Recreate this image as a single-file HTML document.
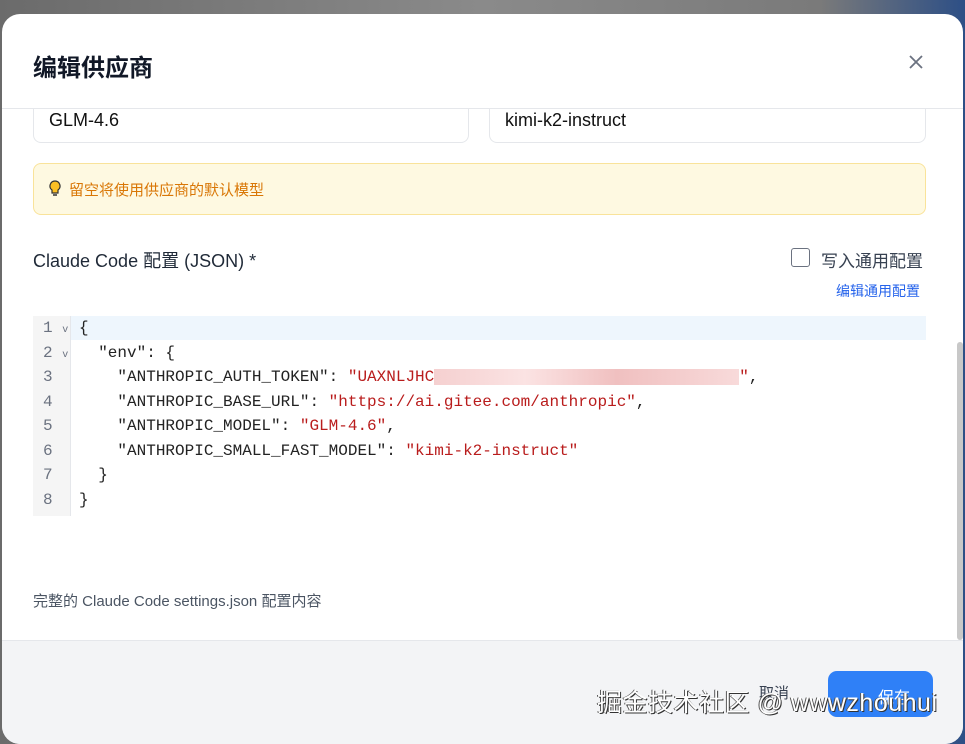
<!DOCTYPE html>
<html><head><meta charset="utf-8"><style>
*{box-sizing:border-box;margin:0;padding:0}
body{width:965px;height:736px;overflow:hidden;background:linear-gradient(90deg,#6b6b6b,#8a8a8a 50%,#7a7a7a 85%,#2d4f86);font-family:"Liberation Sans","Noto Sans CJK SC",sans-serif;position:relative}
.modal{position:absolute;left:2px;top:14px;width:961px;height:730px;background:#fff;border-radius:18px;overflow:hidden}
.hdr{height:95px;border-bottom:1px solid #e5e7eb;position:relative}
.hdr h1{position:absolute;left:31px;top:34px;font-size:24px;font-weight:bold;color:#111827}
.x{position:absolute;left:904px;top:38px;width:20px;height:20px}
.inp{position:absolute;top:95px;height:34px;border:1px solid #e5e7eb;border-top:none;border-radius:0 0 8px 8px;font-size:18px;color:#111;padding:0 0 0 15px;line-height:18px;padding-top:2px}
.tip{position:absolute;left:31px;top:149px;width:893px;height:52px;background:#fef9e1;border:1px solid #f9e39a;border-radius:8px;font-size:15px;color:#d97706;padding:15px 0 0 35px}
.lbl{position:absolute;left:31px;top:233px;font-size:18px;color:#1f2937}
.cb{position:absolute;left:789px;top:234px;width:19px;height:19px;border:1.5px solid #6b7280;border-radius:3px}
.cbt{position:absolute;left:819px;top:233px;font-size:17px;color:#374151}
.edit{position:absolute;left:834px;top:267px;font-size:14px;color:#2563eb}
.code{position:absolute;left:31px;top:302px;width:893px;height:200px;font-family:"Liberation Mono",monospace;font-size:16px}
.gut{position:absolute;left:0;top:0;width:38px;height:200px;background:#f5f5f5;border-right:1px solid #e5e7eb}
.hl{position:absolute;left:0;top:0;width:893px;height:24px;background:#eef6fd}
.ln{position:absolute;height:24.5px;line-height:24px;color:#6b7280}
.tx{position:absolute;left:46px;height:24px;line-height:24px;color:#222;white-space:pre}
.s{color:#b91c1c}
.foot{position:absolute;left:31px;top:576px;font-size:15px;color:#4b5563}
.fbar{position:absolute;left:0;top:626px;width:961px;height:110px;background:#f3f4f6;border-top:1px solid #e5e7eb}
.save{position:absolute;left:826px;top:657px;width:105px;height:46px;background:#2f80f7;border-radius:9px}
.scroll{position:absolute;left:955px;top:328px;width:6px;height:298px;background:#c8c8c8;border-radius:3px}
.wm{position:absolute;left:597px;top:683px;font-size:25px;color:#fff;text-shadow:1px 1px 0 #333,-1px 0 0 #555;letter-spacing:0.5px}
</style></head><body>
<div class="modal">
 <div class="hdr"><h1>编辑供应商</h1>
 <svg class="x" viewBox="0 0 20 20"><path d="M4 4L16 16M16 4L4 16" stroke="#6b7280" stroke-width="1.8"/></svg></div>
 <div class="inp" style="left:31px;width:436px">GLM-4.6</div>
 <div class="inp" style="left:487px;width:437px">kimi-k2-instruct</div>
 <div class="tip"><svg style="position:absolute;left:15px;top:16px" width="12" height="18" viewBox="0 0 12 18"><path d="M6 1a5 5 0 0 0-3 9v3h6v-3a5 5 0 0 0-3-9z" fill="#fbbf24" stroke="#333" stroke-width="1.2"/><path d="M4 15h4" stroke="#333" stroke-width="1.5"/></svg>留空将使用供应商的默认模型</div>
 <div class="lbl">Claude Code 配置 (JSON) *</div>
 <div class="cb"></div><div class="cbt">写入通用配置</div>
 <div class="edit">编辑通用配置</div>
 <div class="code">
  <div class="hl"></div><div class="gut"></div>
  <div class="ln" style="left:10px;top:0">1 <small style="font-size:10px">v</small></div>
  <div class="ln" style="left:10px;top:24.5px">2 <small style="font-size:10px">v</small></div>
  <div class="ln" style="left:10px;top:49px">3</div>
  <div class="ln" style="left:10px;top:73.5px">4</div>
  <div class="ln" style="left:10px;top:98px">5</div>
  <div class="ln" style="left:10px;top:122.5px">6</div>
  <div class="ln" style="left:10px;top:147px">7</div>
  <div class="ln" style="left:10px;top:171.5px">8</div>
  <div class="tx" style="top:0">{</div>
  <div class="tx" style="top:24.5px">  "env": {</div>
  <div class="tx" style="top:49px">    "ANTHROPIC_AUTH_TOKEN": <span class="s">"UAXNLJHC<span style="display:inline-block;width:305px;height:16px;background:linear-gradient(90deg,#f5d0d0,#fbe3e3 30%,#f0c0c0 60%,#f8dada);vertical-align:middle"></span>"</span>,</div>
  <div class="tx" style="top:73.5px">    "ANTHROPIC_BASE_URL": <span class="s">"https://ai.gitee.com/anthropic"</span>,</div>
  <div class="tx" style="top:98px">    "ANTHROPIC_MODEL": <span class="s">"GLM-4.6"</span>,</div>
  <div class="tx" style="top:122.5px">    "ANTHROPIC_SMALL_FAST_MODEL": <span class="s">"kimi-k2-instruct"</span></div>
  <div class="tx" style="top:147px">  }</div>
  <div class="tx" style="top:171.5px">}</div>
 </div>
 <div class="foot">完整的 Claude Code settings.json 配置内容</div>
 <div class="scroll"></div>
 <div class="fbar"></div>
 <div style="position:absolute;left:757px;top:668px;font-size:15px;color:#374151">取消</div>
 <div class="save"><span style="position:absolute;left:50px;top:13px;color:#fff;font-size:16px">保存</span></div>
</div>
<div class="wm">掘金技术社区 @ wwwzhouhui</div>
</body></html>
